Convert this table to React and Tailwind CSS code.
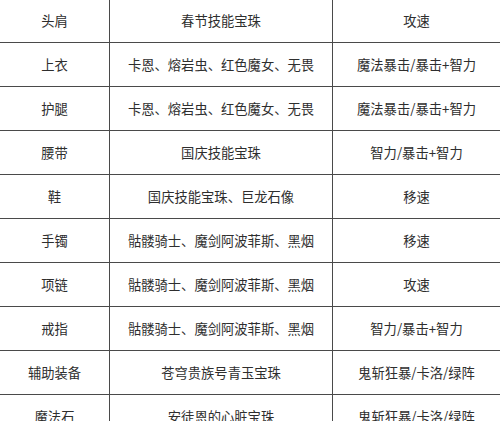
const rows = [
  ['头肩', '春节技能宝珠', '攻速'],
  ['上衣', '卡恩、熔岩虫、红色魔女、无畏', '魔法暴击/暴击+智力'],
  ['护腿', '卡恩、熔岩虫、红色魔女、无畏', '魔法暴击/暴击+智力'],
  ['腰带', '国庆技能宝珠', '智力/暴击+智力'],
  ['鞋', '国庆技能宝珠、巨龙石像', '移速'],
  ['手镯', '骷髅骑士、魔剑阿波菲斯、黑烟', '移速'],
  ['项链', '骷髅骑士、魔剑阿波菲斯、黑烟', '攻速'],
  ['戒指', '骷髅骑士、魔剑阿波菲斯、黑烟', '智力/暴击+智力'],
  ['辅助装备', '苍穹贵族号青玉宝珠', '鬼斩狂暴/卡洛/绿阵'],
  ['魔法石', '安徒恩的心脏宝珠', '鬼斩狂暴/卡洛/绿阵'],
];

export default function App() {
  return (
    <div
      className="w-[500px] h-[421px] overflow-hidden bg-white text-[13.3px] text-[#2e2e2e]"
      style={{ fontFamily: '"Noto Sans CJK SC", "Noto Sans", sans-serif' }}
    >
      {rows.map((r, i) => (
        <div
          key={i}
          className={
            i === 0
              ? 'flex h-[43px] border-b border-[#4a4a4a]'
              : 'flex h-[44px] border-b border-[#4a4a4a]'
          }
        >
          <div className="w-[110px] shrink-0 flex items-center justify-center border-r border-[#4a4a4a]">
            {r[0]}
          </div>
          <div className="w-[223px] shrink-0 flex items-center justify-center border-r border-[#4a4a4a]">
            {r[1]}
          </div>
          <div className="flex-1 flex items-center justify-center">{r[2]}</div>
        </div>
      ))}
    </div>
  );
}
